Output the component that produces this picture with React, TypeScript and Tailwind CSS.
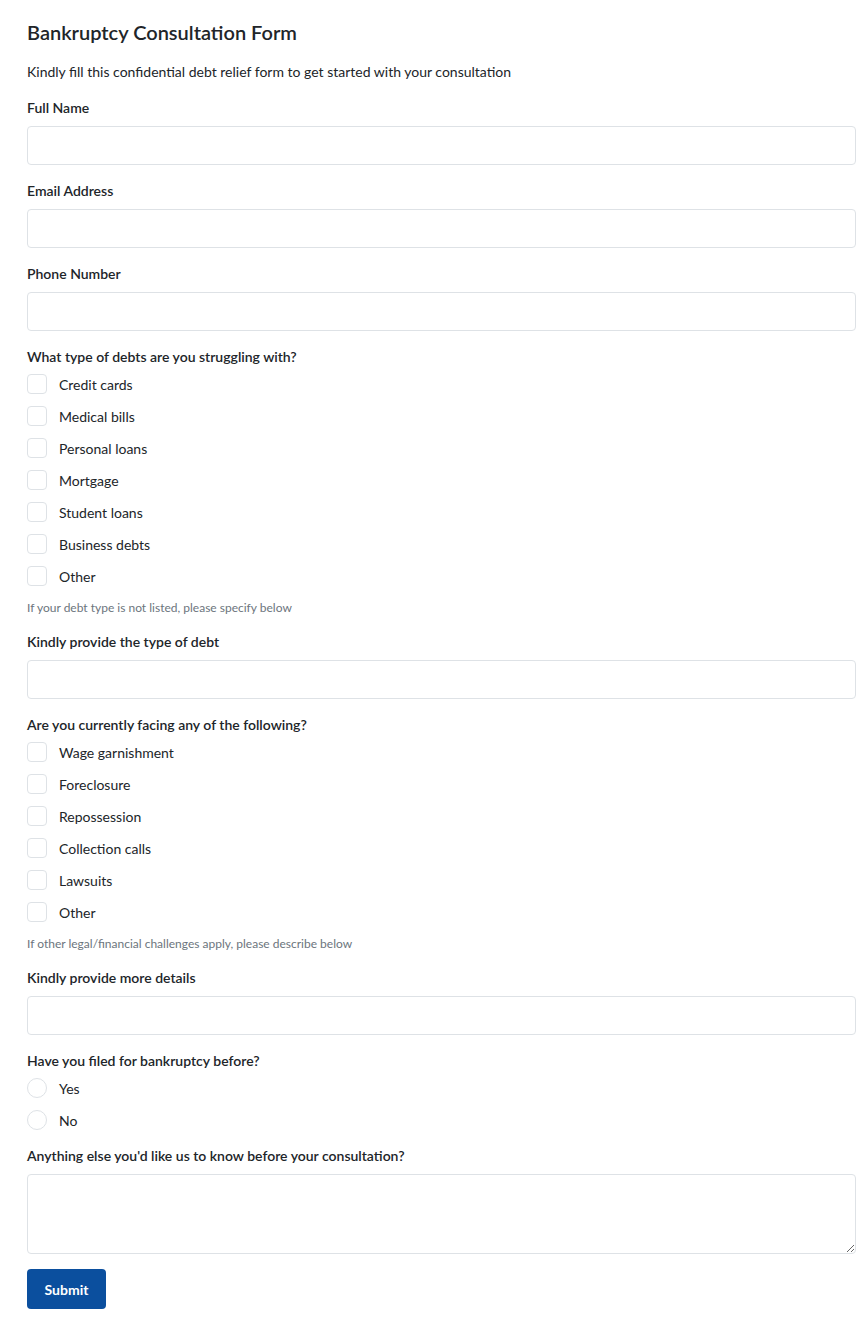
import { ReactNode } from "react";

const debtTypes = [
  "Credit cards",
  "Medical bills",
  "Personal loans",
  "Mortgage",
  "Student loans",
  "Business debts",
  "Other",
];

const challenges = [
  "Wage garnishment",
  "Foreclosure",
  "Repossession",
  "Collection calls",
  "Lawsuits",
  "Other",
];

function Label({ children, className = "" }: { children: ReactNode; className?: string }) {
  return (
    <label className={`block text-[14px] leading-[20px] font-semibold text-[#212529] ${className}`}>
      {children}
    </label>
  );
}

function TextField({ label }: { label: string }) {
  return (
    <div className="mb-4">
      <Label className="mb-2">{label}</Label>
      <input
        type="text"
        className="block w-full h-[39px] px-3 rounded-[4px] border border-[#dee2e6] bg-white text-[14px] outline-none"
      />
    </div>
  );
}

function CheckRow({ text, round = false }: { text: string; round?: boolean }) {
  return (
    <label className="flex items-center h-8 gap-3 text-[14px] text-[#212529]">
      <span
        className={`w-5 h-5 border border-[#dee2e6] bg-white shrink-0 ${round ? "rounded-full" : "rounded-[4px]"}`}
      />
      <span>{text}</span>
    </label>
  );
}

export default function App() {
  return (
    <div className="min-h-screen bg-white pl-[27px] pr-[12px] pt-[19px] pb-8 font-['Lato','Segoe_UI',sans-serif]">
      <form onSubmit={(e) => e.preventDefault()}>
        <h1 className="text-[20px] leading-[26px] font-semibold text-[#212529] mb-4">
          Bankruptcy Consultation Form
        </h1>
        <p className="text-[14px] leading-[21px] text-[#212529] mb-4">
          Kindly fill this confidential debt relief form to get started with your consultation
        </p>

        <TextField label="Full Name" />
        <TextField label="Email Address" />
        <TextField label="Phone Number" />

        <Label className="mb-[1px]">What type of debts are you struggling with?</Label>
        <div>
          {debtTypes.map((t) => (
            <CheckRow key={t} text={t} />
          ))}
        </div>
        <p className="mt-[7px] mb-[15px] text-[12px] leading-[18px] text-[#6c757d]">
          If your debt type is not listed, please specify below
        </p>

        <TextField label="Kindly provide the type of debt" />

        <Label className="mb-[1px]">Are you currently facing any of the following?</Label>
        <div>
          {challenges.map((t) => (
            <CheckRow key={t} text={t} />
          ))}
        </div>
        <p className="mt-[7px] mb-[15px] text-[12px] leading-[18px] text-[#6c757d]">
          If other legal/financial challenges apply, please describe below
        </p>

        <TextField label="Kindly provide more details" />

        <Label className="mb-[1px]">Have you filed for bankruptcy before?</Label>
        <div className="mb-[10px]">
          <CheckRow text="Yes" round />
          <CheckRow text="No" round />
        </div>

        <div className="mb-[15px]">
          <Label className="mb-2">Anything else you'd like us to know before your consultation?</Label>
          <textarea className="block w-full h-20 px-3 py-2 rounded-[4px] border border-[#dee2e6] bg-white text-[14px] outline-none" />
        </div>

        <button
          type="submit"
          className="h-10 w-[79px] rounded-[4px] bg-[#0b4f9e] text-white text-[14px] font-bold"
        >
          Submit
        </button>
      </form>
    </div>
  );
}
